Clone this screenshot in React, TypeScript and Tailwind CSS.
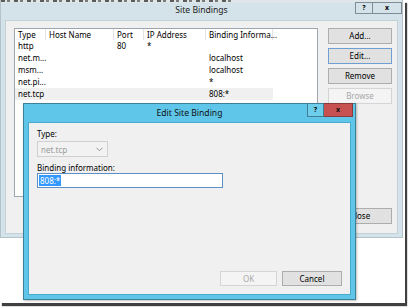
import React from 'react';

const font = "font-['Noto_Sans','DejaVu_Sans',sans-serif]";

const columns = [
  { title: 'Type', w: 'w-[31px]' },
  { title: 'Host Name', w: 'w-[68px]' },
  { title: 'Port', w: 'w-[30px]' },
  { title: 'IP Address', w: 'w-[62px]' },
  { title: 'Binding Informa...', w: 'w-[67px]' },
];

const rows = [
  ['http', '', '80', '*', ''],
  ['net.m...', '', '', '', 'localhost'],
  ['msm...', '', '', '', 'localhost'],
  ['net.pi...', '', '', '', '*'],
  ['net.tcp', '', '', '', '808:*'],
];

const Btn = ({ label, disabled = false, focused = false }: { label: string; disabled?: boolean; focused?: boolean }) => (
  <div
    className={`h-[16px] w-[64px] flex items-center justify-center border text-[8px] leading-[12px] ${
      disabled ? 'bg-[#f4f4f4] border-[#d5d5d5] text-[#a8a8a8]' : 'bg-[#e1e1e1] text-black'
    } ${focused ? 'border-[#6f9fd0]' : disabled ? '' : 'border-[#adadad]'}`}
  >
    {label}
  </div>
);

export default function App() {
  return (
    <div className={`relative w-[409px] h-[308px] bg-white overflow-hidden ${font}`}>
      <div className="relative w-[405px] h-[303px] bg-white shadow-[2px_3px_1px_rgba(0,0,0,0.75)]">
        {/* Site Bindings */}
        <div className="w-[403px] h-[238px] bg-[#d4e2e9] border-l border-[#b4c3ca] border-r border-b flex flex-col">
          {/* bottom edge of the window behind */}
          <div className="h-[3px] bg-[#dfe6ea] flex items-start">
            <div className="w-[230px] h-[2px] bg-[repeating-linear-gradient(90deg,#5c5c5c_0_4px,#dfe6ea_4px_6px,#7a7a7a_6px_9px,#dfe6ea_9px_13px)]" />
          </div>
          <div className="h-[17px] grid grid-cols-[1fr_auto_1fr] items-center">
            <div />
            <div className="text-[8.6px] text-[#222] leading-[10px] -mt-[4px]">Site Bindings</div>
            <div className="flex justify-end self-start -mt-[1px]">
              <div className="w-[18px] h-[12px] border border-[#7f8e96] flex items-center justify-center text-[7px] font-bold leading-[8px]">?</div>
              <div className="w-[29px] h-[12px] border border-l-0 border-[#7f8e96] flex items-center justify-center text-[7px] font-bold leading-[8px]">x</div>
            </div>
          </div>
          <div className="flex-1 mx-[4px] mb-[3px] bg-[#f0f0f0] border border-[#c3d1d8] flex pl-[8px] pt-[7px] pr-[6px] pb-[9px]">
            <div className="w-[304px] h-[169px] bg-white border border-[#9ea6ad] shrink-0">
              <div className="flex h-[11px] items-center text-[8px] leading-[11px]">
                {columns.map((c) => (
                  <div key={c.title} className={`${c.w} h-full border-r border-[#e3e3e3] pl-[3px] whitespace-nowrap`}>
                    {c.title}
                  </div>
                ))}
              </div>
              {rows.map((r, i) => (
                <div key={i} className={`flex h-[12px] items-center text-[8px] leading-[12px] ${i === 4 ? 'bg-[#f0f0f0] w-[258px]' : ''}`}>
                  {r.map((cell, j) => (
                    <div key={j} className={`${columns[j].w} pl-[3px] whitespace-nowrap`}>
                      {cell}
                    </div>
                  ))}
                </div>
              ))}
            </div>
            <div className="ml-[10px] flex flex-col gap-[4px]">
              <Btn label="Add..." />
              <Btn label="Edit..." focused />
              <Btn label="Remove" />
              <Btn label="Browse" disabled />
              <div className="mt-auto">
                <Btn label="Close" />
              </div>
            </div>
          </div>
        </div>

        {/* Edit Site Binding */}
        <div className="absolute left-[23px] top-[103px] w-[333px] h-[197px] bg-[#5fc6ea] border border-[#3f8099] flex flex-col shadow-[1px_1px_2px_rgba(0,0,0,0.25)]">
          <div className="h-[18px] relative flex items-center justify-center">
            <div className="text-[8.6px] leading-[10px] text-[#111] -mt-[1px]">Edit Site Binding</div>
            <div className="absolute right-[2px] top-[-1px] flex">
              <div className="w-[17px] h-[14px] bg-[#6fcdec] border border-[#3f7f96] flex items-center justify-center text-[7px] font-bold leading-[8px]">?</div>
              <div className="w-[29px] h-[14px] bg-[#c75050] border border-l-0 border-[#8a3a3a] flex items-center justify-center text-[7px] font-bold leading-[8px] text-[#111]">x</div>
            </div>
          </div>
          <div className="flex-1 mx-[4px] mb-[4px] bg-[#f0f0f0] border border-[#4aa9cc] flex flex-col px-[8px] pt-[5px] pb-[8px] text-[8px] leading-[11px]">
            <div className="h-[10px] flex items-center">Type:</div>
            <div className="mt-[3px] w-[71px] h-[16px] border border-[#d0d0d0] bg-[#f2f2f2] flex items-center justify-between pl-[3px] pr-[4px] text-[#9a9a9a]">
              <span>net.tcp</span>
              <svg width="7" height="5" viewBox="0 0 7 5" fill="none">
                <path d="M0.5 0.8 L3.5 3.8 L6.5 0.8" stroke="#8a8a8a" strokeWidth="0.9" />
              </svg>
            </div>
            <div className="mt-[5px] h-[10px] flex items-center">Binding information:</div>
            <div className="mt-[1px] w-[186px] h-[15px] border border-[#5a8fc7] bg-white flex items-center pl-[1px]">
              <span className="bg-[#3399ff] text-white px-[1px] h-[11px] flex items-center">808:*</span>
            </div>
            <div className="mt-auto flex justify-end gap-[5px]">
              <div className="w-[57px] h-[15px] bg-[#f4f4f4] border border-[#d5d5d5] text-[#a8a8a8] flex items-center justify-center">OK</div>
              <div className="w-[60px] h-[15px] bg-[#e1e1e1] border border-[#adadad] flex items-center justify-center">Cancel</div>
            </div>
          </div>
        </div>
      </div>
    </div>
  );
}
